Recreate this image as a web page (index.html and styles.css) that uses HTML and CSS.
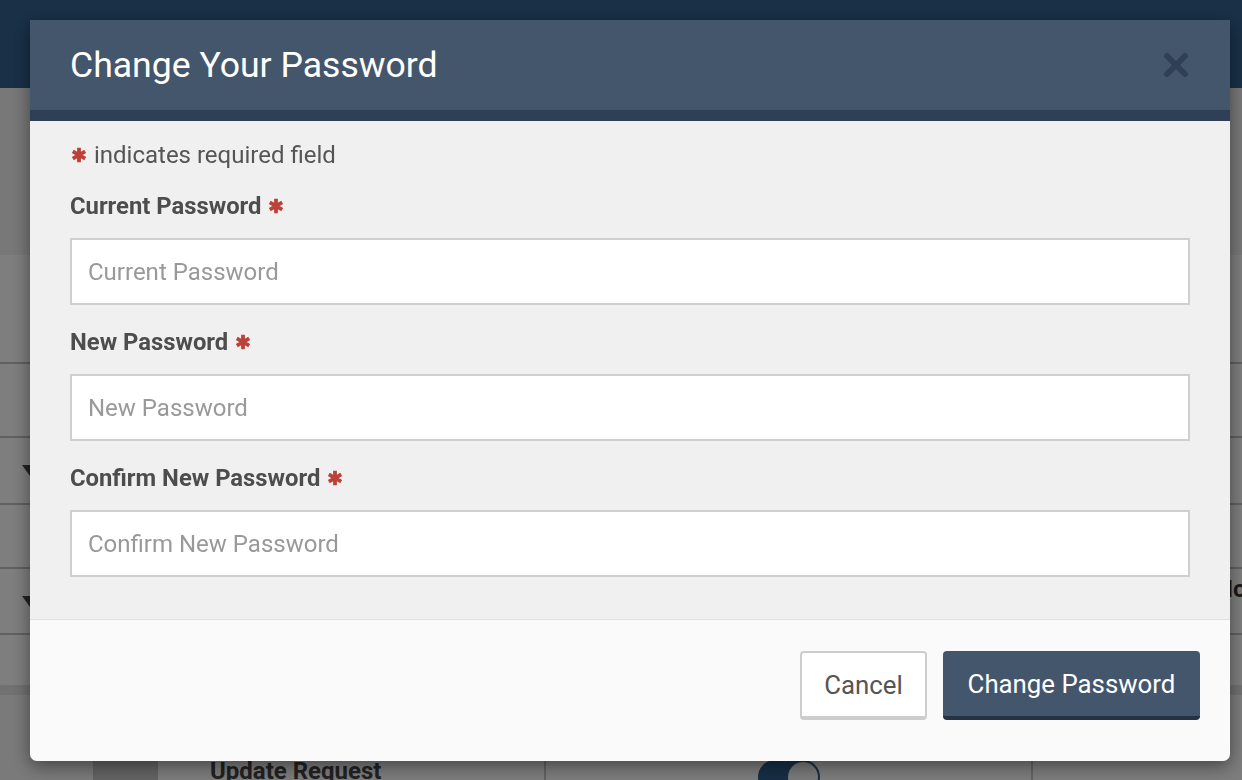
FILE: index.html
```html
<!DOCTYPE html>
<html lang="en">
<head>
    <meta charset="UTF-8">
    <meta name="viewport" content="width=device-width, initial-scale=1.0">
    <title>Change Your Password</title>
    <link rel="stylesheet" href="styles.css">
</head>
<body>
    <div class="page">
        <header class="topbar"></header>
        <section class="panel"></section>
        <div class="rows">
            <div class="row r1"></div>
            <div class="row r2"><span class="caret"></span></div>
            <div class="row r3"></div>
            <div class="row r4"><span class="caret"></span><span class="row-end">Hold</span></div>
            <div class="row r5"></div>
        </div>
        <div class="band"></div>
        <div class="table-row">
            <div class="cell c1"></div>
            <div class="cell c2"></div>
            <div class="cell c3"><strong>Update Request</strong></div>
            <div class="cell c4"><span class="toggle"><span class="knob"></span></span></div>
            <div class="cell c5"></div>
        </div>
    </div>

    <div class="overlay">
        <div class="modal">
            <div class="modal-header">
                <h1>Change Your Password</h1>
                <button type="button" class="close" aria-label="Close">
                    <svg width="26" height="24" viewBox="0 0 26 24">
                        <path d="M4 3 L22 21 M22 3 L4 21" stroke="#2f4055" stroke-width="6" stroke-linecap="round"/>
                    </svg>
                </button>
            </div>
            <form class="modal-body" onsubmit="event.preventDefault();">
                <p class="note"><svg class="req" viewBox="0 0 20 20"><path d="M10 2 V18 M3.1 6 L16.9 14 M3.1 14 L16.9 6" stroke="currentColor" stroke-width="4.2"/></svg> indicates required field</p>
                <div class="form-group">
                    <label for="current_password">Current Password <svg class="req" viewBox="0 0 20 20"><path d="M10 2 V18 M3.1 6 L16.9 14 M3.1 14 L16.9 6" stroke="currentColor" stroke-width="4.2"/></svg></label>
                    <input type="password" id="current_password" placeholder="Current Password">
                </div>
                <div class="form-group">
                    <label for="new_password">New Password <svg class="req" viewBox="0 0 20 20"><path d="M10 2 V18 M3.1 6 L16.9 14 M3.1 14 L16.9 6" stroke="currentColor" stroke-width="4.2"/></svg></label>
                    <input type="password" id="new_password" placeholder="New Password">
                </div>
                <div class="form-group">
                    <label for="confirm_password">Confirm New Password <svg class="req" viewBox="0 0 20 20"><path d="M10 2 V18 M3.1 6 L16.9 14 M3.1 14 L16.9 6" stroke="currentColor" stroke-width="4.2"/></svg></label>
                    <input type="password" id="confirm_password" placeholder="Confirm New Password">
                </div>
            </form>
            <div class="modal-footer">
                <button type="button" class="btn btn-default">Cancel</button>
                <button type="button" class="btn btn-primary">Change Password</button>
            </div>
        </div>
    </div>
</body>
</html>
```

FILE: styles.css
```css
body {
    margin: 0;
    font-family: Roboto, "Liberation Sans", sans-serif;
    background: #fcfcfc;
    overflow: hidden;
}
.page {
    height: 780px;
    overflow: hidden;
}
.topbar {
    height: 88px;
    background: #33618f;
}
.panel {
    height: 167px;
    background: #f0f0f0;
}
.rows {
    padding-top: 107px;
}
.row {
    position: relative;
    border-top: 2px solid #c0c0c0;
}
.r1 { height: 72px; }
.r2 { height: 65px; }
.r3 { height: 62px; }
.r4 { height: 64px; }
.r5 { height: 50px; }
.caret {
    position: absolute;
    left: 22px;
    top: 27px;
    border-left: 8px solid transparent;
    border-right: 8px solid transparent;
    border-top: 11px solid #444;
}
.row-end {
    position: absolute;
    left: 1216px;
    top: 6px;
    font-weight: bold;
    font-size: 24px;
    color: #333;
}
.band {
    height: 10px;
    background: #e2e2e2;
}
.table-row {
    display: flex;
    height: 85px;
}
.cell {
    border-right: 2px solid #c6c6c6;
    background: #fafafa;
}
.c1 { width: 93px; background: #f4f4f4; }
.c2 { width: 61px; background: #c8c8c8; }
.c3 { width: 388px; padding: 63px 0 0 52px; box-sizing: border-box; }
.c3 strong {
    font-size: 24px;
    line-height: 26px;
    color: #444;
}
.c4 { width: 487px; padding: 65px 0 0 212px; box-sizing: border-box; }
.c5 { flex: 1; border-right: 0; }
.toggle {
    display: block;
    width: 62px;
    height: 34px;
    border-radius: 17px;
    background: #2e5d8c;
    position: relative;
}
.knob {
    position: absolute;
    right: 2px;
    top: 2px;
    width: 30px;
    height: 30px;
    border-radius: 50%;
    background: #f4f4f4;
}

.overlay {
    position: fixed;
    inset: 0;
    background: rgba(0, 0, 0, 0.5);
    padding: 20px 0 0 30px;
}
.modal {
    width: 1200px;
    border-radius: 0 0 7px 7px;
    box-shadow: 0 5px 18px rgba(0, 0, 0, 0.45);
    overflow: hidden;
}
.modal-header {
    display: flex;
    align-items: center;
    justify-content: space-between;
    height: 90px;
    padding: 0 40px;
    background: #44566c;
    border-bottom: 11px solid #2f3f55;
}
.modal-header h1 {
    margin: 0;
    font-size: 35.6px;
    font-weight: 400;
    color: #fff;
}
.close {
    background: none;
    border: 0;
    padding: 0;
    margin-right: 1px;
    display: flex;
}
.modal-body {
    background: #f0f0f0;
    padding: 20px 40px 42px;
    border-bottom: 1px solid #e0e0e0;
}
.note {
    margin: 0;
    height: 28px;
    font-size: 24px;
    line-height: 28px;
    color: #555;
}
.req {
    width: 18px;
    height: 18px;
    color: #bb4139;
    vertical-align: -1px;
}
.form-group {
    display: flex;
    flex-direction: column;
    margin-top: 23px;
}
.form-group + .form-group {
    margin-top: 23px;
}
label {
    height: 28px;
    font-size: 23.8px;
    line-height: 28px;
    font-weight: bold;
    color: #4d4d4d;
    margin-bottom: 18px;
}
input[type="password"] {
    height: 67px;
    box-sizing: border-box;
    border: 2px solid #cfcfcf;
    background: #fff;
    padding: 0 16px;
    font-family: Roboto, "Liberation Sans", sans-serif;
    font-size: 24px;
}
input::placeholder {
    color: #999;
}
.modal-footer {
    display: flex;
    justify-content: flex-end;
    gap: 16px;
    background: #fafafa;
    padding: 31px 30px 41px;
}
.btn {
    height: 69px;
    box-sizing: border-box;
    border-radius: 4px;
    font-family: Roboto, "Liberation Sans", sans-serif;
    font-size: 25.8px;
    padding: 0 20px;
}
.btn-default {
    background: #fff;
    color: #555;
    border: 2px solid #cdcdcd;
    border-bottom-width: 4px;
    width: 127px;
}
.btn-primary {
    background: #44566c;
    color: #fff;
    border: 0;
    border-bottom: 4px solid #243244;
    width: 257px;
}
```
